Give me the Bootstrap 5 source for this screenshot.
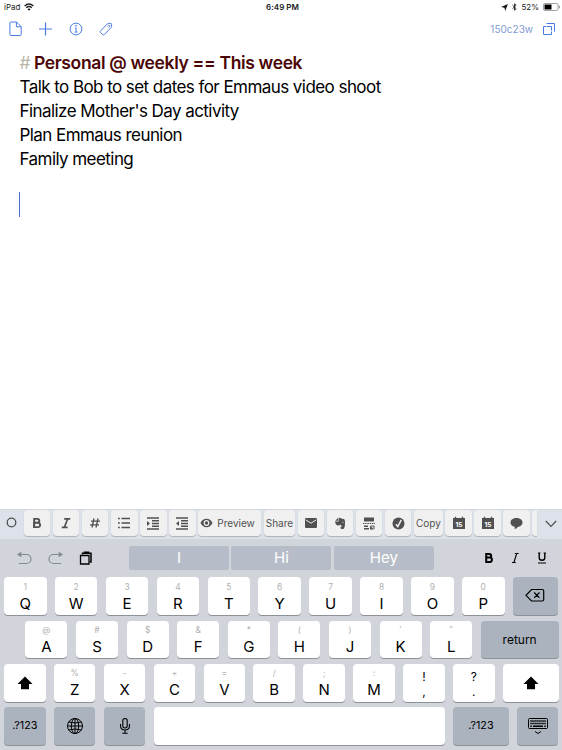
<!DOCTYPE html>
<html lang="en">
<head>
<meta charset="utf-8">
<meta name="viewport" content="width=device-width, initial-scale=1">
<title>Notes</title>
<link href="https://cdn.jsdelivr.net/npm/bootstrap@5.3.0/dist/css/bootstrap.min.css" rel="stylesheet">
<style>
body{width:562px;height:750px;font-family:Inter,"Liberation Sans",sans-serif;color:#000;line-height:1}
svg{display:block;flex:none;fill:none;stroke:currentColor}
.status{height:14px;font-size:8px;padding:0 2px 0 4px;color:#222}
.side{width:200px}
.clock{font-weight:600;letter-spacing:.05px;padding-left:1px}
.tools{height:30px;padding:0 6px 0 8px;color:#4a7be0}
.tools .count{font-size:10px;color:#7f9bd6}
.tools .windows{margin-left:9px}
.note{padding:7px 19px 0 19.5px;font-size:17px;line-height:24px;letter-spacing:-.56px}
.note h1{font-size:17.5px;line-height:24px;font-weight:600;color:#4c0505;letter-spacing:-.35px}
.note h1 span{color:#b9b5a4;font-weight:400;letter-spacing:-.7px}
.cursor{width:1px;height:25px;background:#4a6ed0;margin:21px 0 0 -.5px}
.accessory{height:30px;background:#dde1ea;border-top:1px solid #d3d7df;color:#505050;gap:2.6px;padding-top:.7px}
.tkey{height:26px;width:26.45px;flex:none;background:#f0f0f0;border-radius:4px;box-shadow:0 1px 1px #aeb2ba;font-size:10px}
.tkey.preview{width:62.8px}
.tkey.share{width:31.7px}
.tkey.copy{width:28.8px}
.ring{width:21.4px;padding-left:6px}
.tkey.cut{width:5px;border-radius:4px 0 0 4px}
.board{background:#d1d5db;height:211.5px}
.predict{height:38px;padding:7px 0 6.5px}
.edit{width:129px;padding-left:16px;gap:15.5px}
.soft{color:#858a91}
.words{gap:2.7px}
.word{width:99.8px;height:24.5px;background:#b7bdc8;border-radius:2px;color:#fff;font-size:15px}
.format{padding-right:15px;gap:17px}
.krow{padding:0 3.5px 0 4px}
.k{height:37.4px;width:42.5px;flex:none;background:#fff;border-radius:4px;box-shadow:0 1px 0 #8d9198;font-size:15px;color:#000;padding-top:4px}
.k small{font-size:8.4px;line-height:11px;color:#b0b0b0;height:14px}
.k span{line-height:16px}
.k.dim,.k.up{background:#abb3be;font-size:10.8px;padding-top:0}
.k.up{background:#fff}
.r1{gap:8.4px;margin-bottom:6.2px}
.r1 .k{height:38.2px}
.r1 .k:not(.dim){padding-top:5px}
.r1 .k.dim{width:45px}
.r2{gap:8.6px;padding-left:25.4px;margin-bottom:5.9px}
.r2 .k{width:42px}
.r3,.r4{gap:8.3px}
.r3{margin-bottom:5.9px}
.r3 .k,.r4 .k{width:41.6px}
.r2 .k.ret{width:77.8px;font-size:12px}
.r3 .k.sh{width:56px}
.r4 .k.space{width:291px}
.r4 .k.num{width:56px}
.r4 .k.hide{width:41px}
.k .pun{font-size:12px;line-height:15px}
.k .pun:first-child{padding-top:1px}
</style>
</head>
<body class="bg-white d-flex flex-column overflow-hidden">
<header>
  <div class="status d-flex align-items-center justify-content-between">
    <div class="side d-flex align-items-center gap-1"><span>iPad</span>
      <svg width="10" height="8" viewBox="0 0 10 8" stroke-width="1.4"><path d="M.6 3Q5-1 9.4 3M2.2 4.8Q5 2.4 7.8 4.8"/><path d="M3.5 6.1Q5 5 6.5 6.1L5 7.8z" fill="#000" stroke="none"/></svg>
    </div>
    <div class="clock">6:49 PM</div>
    <div class="side d-flex align-items-center justify-content-end">
      <svg width="7" height="7" viewBox="0 0 7 7"><path d="M6.900.1 4.200 6.900 3.500 3.700.1 3.100z" fill="#111" stroke="none"/></svg>
      <svg class="ms-1 me-1" width="5" height="8" viewBox="0 0 5 8" stroke-width=".9"><path d="M.5 2.2 4.2 5.7 2.5 7.2V.8L4.2 2.3.5 5.8"/></svg>
      <span>52%</span>
      <svg class="soft ms-1" width="17" height="8" viewBox="0 0 17 8"><rect x=".5" y=".5" width="14.500" height="7" rx="1.3" stroke-width=".8"/><path d="M1.5 1.500h7v5h-7z" fill="#000" stroke="none"/><path d="M16.300 2.700v2.600"/></svg>
    </div>
  </div>
  <nav class="tools d-flex align-items-center">
    <svg width="15" height="16" viewBox="0 0 15 16"><path d="M2.9 1H8.5L13.2 5.700V13.600Q13.200 14.500 12.300 14.500H2.800Q1.900 14.500 1.900 13.600V2Q1.900 1 2.900 1M8.400 1V5.800H13"/></svg>
    <svg class="ms-3" width="14" height="14" viewBox="0 0 14 14" stroke-width="1.2"><path d="M6.500.5v13M0 7h13"/></svg>
    <svg class="ms-3" width="14" height="14" viewBox="0 0 14 14"><circle cx="7" cy="7" r="5.9"/><path d="M5.900 6h1.200v4M5.600 10.100h2.900"/><circle cx="7" cy="3.900" r=".8" fill="#4a7be0" stroke="none"/></svg>
    <svg class="ms-3" width="14" height="14" viewBox="0 0 14 14"><path d="M1.300 9.300 8.100 2.100Q8.700 1.500 9.500 1.500L11.800 1.400Q12.500 1.500 12.600 2.200L12.500 4.600Q12.400 5.300 11.900 5.800L5.200 12.700Q4.500 13.200 3.900 12.700L1.300 10.400Q.9 9.800 1.300 9.300z"/><path d="M8.500 4.300Q9.800 2.800 11 3.500 10.900 5.100 9.500 5.400" stroke-width=".8"/></svg>
    <span class="count ms-auto">150c23w</span>
    <svg class="windows" width="14" height="14" viewBox="0 0 14 14"><path d="M4.500 1.500h8v8M4.500 4.500h-3v8h8V9.500M5 4.500h4.500v4"/></svg>
  </nav>
</header>

<main class="note flex-grow-1">
  <h1 class="mb-0"><span>#</span> Personal @ weekly == This week</h1>
  <div>Talk to Bob to set dates for Emmaus video shoot</div>
  <div>Finalize Mother's Day activity</div>
  <div>Plan Emmaus reunion</div>
  <div>Family meeting</div>
  <div class="cursor"></div>
</main>

<div class="accessory d-flex flex-shrink-0">
  <div class="ring d-flex align-items-center pb-1"><svg width="11" height="11" viewBox="0 0 11 11"><circle cx="5.500" cy="5.500" r="4.300" stroke-width="1.300"/></svg></div>
  <div class="tkey d-flex align-items-center justify-content-center"><svg width="12" height="12" viewBox="0 0 12 12" stroke-width="1.9"><path d="M3 1.900h3.400Q8.300 2 8.300 3.800T6.400 5.700H3M3 5.700h3.800Q9.100 5.800 9.100 8T6.800 10.100H3zM3.200 1v10"/></svg></div>
  <div class="tkey d-flex align-items-center justify-content-center"><svg width="12" height="12" viewBox="0 0 12 12" stroke-width="1.7"><path d="M4.200 1.800h6M1.800 10.300h5.800M7.600 2 4.500 10"/></svg></div>
  <div class="tkey d-flex align-items-center justify-content-center"><svg width="12" height="12" viewBox="0 0 12 12" stroke-width="1.3"><path d="M5 1.500 3 10.500M9 1.500 7 10.500M2 4.200h9M1 7.800h9"/></svg></div>
  <div class="tkey d-flex align-items-center justify-content-center"><svg width="14" height="12" viewBox="0 0 14 12" stroke-width="1.7"><path d="M4.500 1.500H13M4.500 6H13M4.500 10.500H13M1 1.500h1.800M1 6h1.800M1 10.500h1.800"/></svg></div>
  <div class="tkey d-flex align-items-center justify-content-center"><svg width="14" height="13" viewBox="0 0 14 13" stroke-width="1.4"><path d="M1 1h12M6 3.800h7M6 6.500h7M6 9.200h7M1 12h12"/><path d="M1 4v5l3-2.500z" fill="#505050" stroke="none"/></svg></div>
  <div class="tkey d-flex align-items-center justify-content-center"><svg width="14" height="13" viewBox="0 0 14 13" stroke-width="1.4"><path d="M1 1h12M6 3.800h7M6 6.500h7M6 9.200h7M1 12h12"/><path d="M4 4v5L1 6.500z" fill="#505050" stroke="none"/></svg></div>
  <div class="tkey preview d-flex align-items-center justify-content-center"><svg class="me-1" width="13" height="10" viewBox="0 0 12 10"><path d="M0 5Q2.200.8 6 .8T12 5Q9.800 9.200 6 9.200T0 5" fill="#505050" stroke="none"/><circle cx="6" cy="5" r="2.900" fill="#f0f0f0" stroke="none"/><circle cx="6" cy="5" r="1.700" fill="#505050" stroke="none"/></svg><span class="me-1">Preview</span></div>
  <div class="tkey share d-flex align-items-center justify-content-center">Share</div>
  <div class="tkey d-flex align-items-center justify-content-center"><svg width="14" height="12" viewBox="0 0 14 12"><rect x="1" y="1" width="12" height="10" rx="1" fill="#505050" stroke="none"/><path d="M1.700 2.800 7 6.200 12.300 2.800" stroke="#f0f0f0"/></svg></div>
  <div class="tkey d-flex align-items-center justify-content-center"><svg width="12" height="13" viewBox="0 0 12 13"><path d="M4 1 1.200 3.800H4zM4.600.800Q7 .500 7.500 1.700L9.800 2.100Q10.900 2.400 11 4.500 11.200 9.300 10.100 11.200 9.300 12.300 7.600 12 6.300 11.700 6.500 10.300 6.800 9.200 8.300 9.500 7 8.600 6.300 7.500 5.500 8.800 3.800 8.400 1.500 8.100 1 4.500H4.600z" fill="#505050" stroke="none"/><path d="M8.300 5.200q.8-.5 1.300.2" stroke="#f0f0f0" stroke-width=".7"/></svg></div>
  <div class="tkey d-flex align-items-center justify-content-center"><svg width="12" height="13" viewBox="0 0 12 13"><path d="M1 .500h10v4H1zM1 8.500h4V10H1zM1 11h5v1.500H1zM7 8.500l4 4H7z" fill="#505050" stroke="none"/><path d="M0 6.500h12" stroke-dasharray="1.500 .7"/><path d="M8 9h3v3"/></svg></div>
  <div class="tkey d-flex align-items-center justify-content-center"><svg width="13" height="13" viewBox="0 0 13 13"><circle cx="6.500" cy="6.500" r="6" fill="#505050" stroke="none"/><path d="M4 7.200 5.800 9.500 9.300 2.800" stroke="#f0f0f0" stroke-width="1.500"/></svg></div>
  <div class="tkey copy d-flex align-items-center justify-content-center">Copy</div>
  <div class="tkey d-flex align-items-center justify-content-center"><svg width="14" height="14" viewBox="0 0 14 14"><path d="M1 2h12v11H1z" fill="#505050" stroke="none"/><path d="M3.500.8v2M10.500.8v2" stroke-width="1.400"/><text x="7" y="11" text-anchor="middle" font-size="6.600" font-weight="700" fill="#fff" stroke="none">15</text></svg></div>
  <div class="tkey d-flex align-items-center justify-content-center"><svg width="14" height="14" viewBox="0 0 14 14"><path d="M1 2h12v11H1z" fill="#505050" stroke="none"/><path d="M3.500.8v2M10.500.8v2" stroke-width="1.400"/><text x="7" y="11" text-anchor="middle" font-size="6.600" font-weight="700" fill="#fff" stroke="none">15</text></svg></div>
  <div class="tkey d-flex align-items-center justify-content-center"><svg width="13" height="13" viewBox="0 0 13 13"><path d="M6.500 1C9.800 1 12.500 2.700 12.500 5.500S9.700 9.700 7.800 9.900Q6.600 11.600 4.400 12.100 5 11 4.700 9.700C2 9.200.500 7.700.500 5.500.500 2.700 3.200 1 6.500 1" fill="#505050" stroke="none"/></svg></div>
  <div class="tkey cut"></div>
  <div class="flex-grow-1 d-flex align-items-center justify-content-center pb-1"><svg class="mt-1" width="12" height="8" viewBox="0 0 12 8" stroke-width="1.200"><path d="M.8 1 6 6.300 11.200 1"/></svg></div>
</div>

<section class="board flex-shrink-0">
  <div class="predict d-flex">
    <div class="edit d-flex align-items-center">
      <svg class="soft" width="16" height="14" viewBox="0 0 16 14" stroke-width="1.200"><path d="M4 3.500h6.500a4.500 4.500 0 0 1 0 9H3"/><path d="M5.300.700v5.600L.800 3.500z" fill="#858a91" stroke="none"/></svg>
      <svg class="soft" width="16" height="14" viewBox="0 0 16 14" stroke-width="1.200"><path d="M12 3.500H5.500a4.500 4.500 0 0 0 0 9H13"/><path d="M10.700.700v5.600l4.500-2.800z" fill="#858a91" stroke="none"/></svg>
      <svg class="text-black" width="14" height="14" viewBox="0 0 14 14"><path d="M1.500 4.500h8.500v8.500H1.500z" stroke-width="1.300"/><path d="M3.500 3.400V2.300H12V11H10.800M5.500 2V1.200h4V2" stroke-width="1.500"/></svg>
    </div>
    <div class="words d-flex">
      <div class="word d-flex align-items-center justify-content-center">I</div>
      <div class="word d-flex align-items-center justify-content-center">Hi</div>
      <div class="word d-flex align-items-center justify-content-center">Hey</div>
    </div>
    <div class="format flex-grow-1 d-flex align-items-center justify-content-end text-black">
      <svg width="10" height="12" viewBox="0 0 10 12" stroke-width="2"><path d="M2.300 1.900h3Q7.200 2 7.200 3.700T5.300 5.600H2.300M2.300 5.600h3.600Q7.900 5.700 7.900 7.800T5.900 10H2.300M2.200 1v10"/></svg>
      <svg width="9" height="12" viewBox="0 0 9 12"><path d="M3.800 1.500h3.800M1 10.500h3.800M5.700 1.500 2.900 10.500" stroke-width="1.100"/></svg>
      <svg width="10" height="13" viewBox="0 0 10 13" stroke-width="1.400"><path d="M2.200 2v4.500Q2.200 9.300 5 9.300T7.800 6.500V2"/><path d="M1 12h8M1 2h2.400M6.600 2H9" stroke-width="1"/></svg>
    </div>
  </div>

  <div class="krow r1 d-flex">
    <div class="k d-flex flex-column align-items-center"><small>1</small><span>Q</span></div>
    <div class="k d-flex flex-column align-items-center"><small>2</small><span>W</span></div>
    <div class="k d-flex flex-column align-items-center"><small>3</small><span>E</span></div>
    <div class="k d-flex flex-column align-items-center"><small>4</small><span>R</span></div>
    <div class="k d-flex flex-column align-items-center"><small>5</small><span>T</span></div>
    <div class="k d-flex flex-column align-items-center"><small>6</small><span>Y</span></div>
    <div class="k d-flex flex-column align-items-center"><small>7</small><span>U</span></div>
    <div class="k d-flex flex-column align-items-center"><small>8</small><span>I</span></div>
    <div class="k d-flex flex-column align-items-center"><small>9</small><span>O</span></div>
    <div class="k d-flex flex-column align-items-center"><small>0</small><span>P</span></div>
    <div class="k dim d-flex align-items-center justify-content-center"><svg width="20" height="15" viewBox="0 0 20 15" stroke-width="1.200"><path d="M6.500 1.500H17.200Q18.700 1.500 18.700 3v8.500Q18.700 13 17.200 13H6.500L1 7.300zM9.200 4.500l5.300 5.300M14.500 4.500 9.200 9.800"/></svg></div>
  </div>
  <div class="krow r2 d-flex">
    <div class="k d-flex flex-column align-items-center"><small>@</small><span>A</span></div>
    <div class="k d-flex flex-column align-items-center"><small>#</small><span>S</span></div>
    <div class="k d-flex flex-column align-items-center"><small>$</small><span>D</span></div>
    <div class="k d-flex flex-column align-items-center"><small>&amp;</small><span>F</span></div>
    <div class="k d-flex flex-column align-items-center"><small>*</small><span>G</span></div>
    <div class="k d-flex flex-column align-items-center"><small>(</small><span>H</span></div>
    <div class="k d-flex flex-column align-items-center"><small>)</small><span>J</span></div>
    <div class="k d-flex flex-column align-items-center"><small>′</small><span>K</span></div>
    <div class="k d-flex flex-column align-items-center"><small>″</small><span>L</span></div>
    <div class="k dim ret d-flex align-items-center justify-content-center">return</div>
  </div>
  <div class="krow r3 d-flex">
    <div class="k up d-flex align-items-center justify-content-center"><svg width="16" height="14" viewBox="0 0 16 14"><path d="M8 .500 15.500 8H12v5.300H4V8H.500z" fill="#000" stroke="none"/></svg></div>
    <div class="k d-flex flex-column align-items-center"><small>%</small><span>Z</span></div>
    <div class="k d-flex flex-column align-items-center"><small>-</small><span>X</span></div>
    <div class="k d-flex flex-column align-items-center"><small>+</small><span>C</span></div>
    <div class="k d-flex flex-column align-items-center"><small>=</small><span>V</span></div>
    <div class="k d-flex flex-column align-items-center"><small>/</small><span>B</span></div>
    <div class="k d-flex flex-column align-items-center"><small>;</small><span>N</span></div>
    <div class="k d-flex flex-column align-items-center"><small>:</small><span>M</span></div>
    <div class="k d-flex flex-column align-items-center"><span class="pun">!</span><span class="pun">,</span></div>
    <div class="k d-flex flex-column align-items-center"><span class="pun">?</span><span class="pun">.</span></div>
    <div class="k up sh d-flex align-items-center justify-content-center"><svg width="16" height="14" viewBox="0 0 16 14"><path d="M8 .500 15.500 8H12v5.300H4V8H.500z" fill="#000" stroke="none"/></svg></div>
  </div>
  <div class="krow r4 d-flex">
    <div class="k dim d-flex align-items-center justify-content-center">.?123</div>
    <div class="k dim d-flex align-items-center justify-content-center"><svg width="18" height="18" viewBox="0 0 18 18"><circle cx="9" cy="9" r="7.500"/><ellipse cx="9" cy="9" rx="3.700" ry="7.500"/><path d="M9 1.500v15M1.500 9h15M2.700 5q6.300 2 12.600 0M2.700 13q6.300-2 12.600 0"/></svg></div>
    <div class="k dim d-flex align-items-center justify-content-center"><svg width="12" height="18" viewBox="0 0 12 18" stroke-width="1.100"><rect x="3.800" y="1.500" width="4.400" height="9.500" rx="2.200"/><path d="M1.500 7v1.500Q1.500 13 6 13T10.500 8.500V7M6 13v3M3.300 16.300h5.400"/></svg></div>
    <div class="k space"></div>
    <div class="k dim num d-flex align-items-center justify-content-center">.?123</div>
    <div class="k dim hide d-flex align-items-center justify-content-center"><svg width="22" height="18" viewBox="0 0 22 18"><rect x="1.500" y="1.500" width="19" height="10" rx="1"/><path d="M3.300 4h15.500M3.300 6.500h15.500" stroke-width="1.500" stroke-dasharray="1.500 .5"/><path d="M3.300 9.200h1.500M6 9.200h10M17.300 9.200h1.500" stroke-width="1.500"/><path d="M8 14.500l3 2 3-2"/></svg></div>
  </div>
</section>
<script src="https://cdn.jsdelivr.net/npm/bootstrap@5.3.0/dist/js/bootstrap.bundle.min.js"></script>
</body>
</html>
